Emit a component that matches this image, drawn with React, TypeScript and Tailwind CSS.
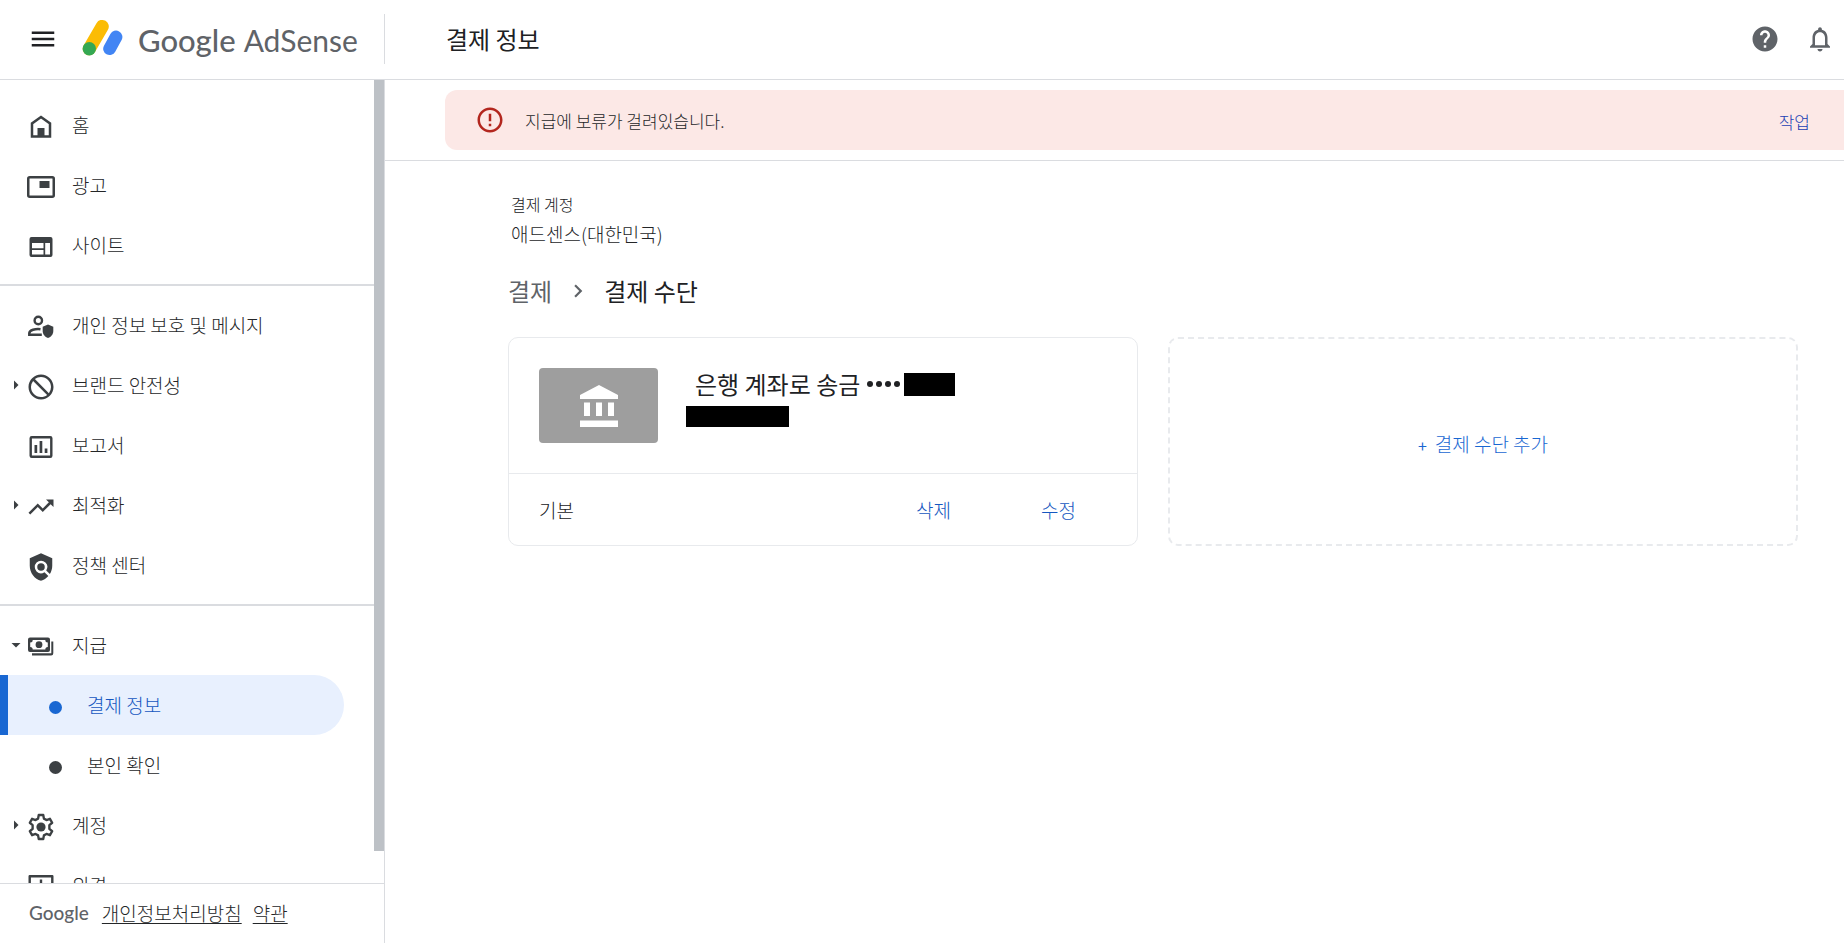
import type { ReactNode } from "react";
import {
  MdBlock,
  MdChevronRight,
  MdErrorOutline,
  MdHelp,
  MdMenu,
  MdNotificationsNone,
  MdPolicy,
  MdTrendingUp,
} from "react-icons/md";

function Glyph({ children }: { children: ReactNode }) {
  return (
    <svg viewBox="0 0 30 30" className="size-[30px]" fill="currentColor" aria-hidden="true">
      {children}
    </svg>
  );
}

const HomeIcon = () => (
  <Glyph>
    <path d="M6 24.5V11.5L15 5l9 6.500V24.500Z" fill="none" stroke="currentColor" strokeWidth="2.500" />
    <path d="M11.500 16h7v9h-7z" />
  </Glyph>
);

const AdsIcon = () => (
  <Glyph>
    <rect x="2.250" y="5.250" width="25.500" height="19.500" rx="1.500" fill="none" stroke="currentColor" strokeWidth="2.500" />
    <path d="M13.500 9h10v7h-10z" />
  </Glyph>
);

const SiteIcon = () => (
  <Glyph>
    <path
      fillRule="evenodd"
      d="M5.500 5h19a2 2 0 0 1 2 2v16a2 2 0 0 1-2 2h-19a2 2 0 0 1-2-2V7a2 2 0 0 1 2-2Zm.5 6v5.200h11.500V11Zm0 7v4.500h11.500V18ZM19.200 11v11.500H24V11Z"
    />
  </Glyph>
);

const PrivacyIcon = () => (
  <Glyph>
    <circle cx="12.300" cy="8.500" r="3.700" fill="none" stroke="currentColor" strokeWidth="2.400" />
    <path d="M14.500 17.200c-5-.7-11.200 1-11.200 4v1.500h12.500" fill="none" stroke="currentColor" strokeWidth="2.500" />
    <path d="M22 12.500l5.300 2.200v4.300c0 3.300-2.200 6-5.300 7-3.100-1-5.300-3.700-5.300-7v-4.300z" />
  </Glyph>
);

const ReportIcon = () => (
  <Glyph>
    <rect x="4.700" y="5.200" width="20.600" height="19.600" rx="1" fill="none" stroke="currentColor" strokeWidth="2.400" />
    <path d="M8.500 13h2.700v8H8.500zM13.600 9h2.700v12h-2.700zM18.700 16.500h2.700V21h-2.700z" />
  </Glyph>
);

const PaymentsIcon = () => (
  <Glyph>
    <path
      fillRule="evenodd"
      d="M4 5.500h18a2 2 0 0 1 2 2V18a2 2 0 0 1-2 2H4a2 2 0 0 1-2-2V7.500a2 2 0 0 1 2-2Zm2.700 2.500a2.500 2.500 0 0 1-2.500 2.500v4.500a2.500 2.500 0 0 1 2.500 2.500h12.600a2.500 2.500 0 0 1 2.500-2.500v-4.500A2.500 2.500 0 0 1 19.300 8Z"
    />
    <circle cx="13" cy="12.700" r="3.400" />
    <path d="M25.300 9.500h2V21.300a2.200 2.200 0 0 1-2.200 2.200H6v-2.200h19.300z" />
  </Glyph>
);

const SettingsIcon = () => (
  <Glyph>
    <path
      d="M12.600 2.200h4.800l.7 3.900 2.700 1.500 3.700-1.300 2.400 4.200-3 2.500v4l3 2.500-2.400 4.200-3.700-1.300-2.700 1.500-.7 3.900h-4.800l-.7-3.900-2.700-1.500-3.700 1.300-2.400-4.200 3-2.500v-4l-3-2.500 2.400-4.200 3.700 1.300 2.700-1.500z"
      transform="translate(.9 .9) scale(.94)"
      fill="none"
      stroke="currentColor"
      strokeWidth="2.500"
      strokeLinejoin="round"
    />
    <circle cx="15" cy="15" r="4.600" />
  </Glyph>
);

const FeedbackIcon = () => (
  <Glyph>
    <path d="M3.700 26V4.200h22.600V22H7.500z" fill="none" stroke="currentColor" strokeWidth="2.400" strokeLinejoin="round" />
    <path d="M13.800 7.500h2.400v7h-2.400zM13.800 16.500h2.400v2.400h-2.400z" />
  </Glyph>
);

const BankIcon = () => (
  <svg viewBox="0 0 38 42" className="h-[42px] w-[38px]" fill="#fff" aria-hidden="true">
    <path d="M19 0l19 10v4H0v-4zM4 17.500h6V31H4zM16 17.500h6V31h-6zM28 17.500h6V31h-6zM0 35.500h38V42H0z" />
  </svg>
);

const AdSenseLogo = () => (
  <svg viewBox="0 0 44 40" className="h-10 w-11" aria-hidden="true">
    <path d="M22.200 9.500L9.300 31.700" stroke="#fbbc04" strokeWidth="13.200" strokeLinecap="round" />
    <path d="M36 20L29.600 31.700" stroke="#4285f4" strokeWidth="12.800" strokeLinecap="round" />
    <circle cx="9.300" cy="31.700" r="6.700" fill="#34a853" />
  </svg>
);

type Item = { label: string; icon: ReactNode; arrow?: "right" | "down" };

function Arrow({ dir }: { dir?: "right" | "down" }) {
  return (
    <span className="flex w-[26px] justify-end pr-[5px]">
      {dir && (
        <svg viewBox="0 0 10 10" className="size-[10px]" fill="currentColor" aria-hidden="true">
          {dir === "right" ? <path d="M3 .5l4.500 4.500L3 9.500z" /> : <path d="M.5 3h9L5 7.500z" />}
        </svg>
      )}
    </span>
  );
}

function NavRow({ label, icon, arrow }: Item) {
  return (
    <a href="#" className="flex h-[60px] shrink-0 items-center text-[19px] leading-6 text-[#3c4043]">
      <Arrow dir={arrow} />
      <span className="pt-1">{icon}</span>
      <span className="ml-4 font-light text-[#242628]">{label}</span>
    </a>
  );
}

function SubRow({ label, active }: { label: string; active?: boolean }) {
  return (
    <a
      href="#"
      className={
        active
          ? "mr-[30px] flex h-[60px] shrink-0 items-center rounded-r-full border-l-8 border-[#1967d2] bg-[#e8f0fe] text-[19px] leading-6 text-[#1967d2]"
          : "mr-[30px] flex h-[60px] shrink-0 items-center border-l-8 border-transparent text-[19px] leading-6 text-[#3c4043]"
      }
    >
      <span className="mt-1 ml-[41px] size-[13px] rounded-full bg-current" />
      <span className={active ? "ml-[25px] font-light text-[#1557c0]" : "ml-[25px] font-light text-[#242628]"}>
        {label}
      </span>
    </a>
  );
}

const Divider = () => <hr className="my-[9px] shrink-0 border-t-2 border-[#dadce0]" />;

const main: Item[] = [
  { label: "홈", icon: <HomeIcon /> },
  { label: "광고", icon: <AdsIcon /> },
  { label: "사이트", icon: <SiteIcon /> },
];

const tools: Item[] = [
  { label: "개인 정보 보호 및 메시지", icon: <PrivacyIcon /> },
  { label: "브랜드 안전성", icon: <MdBlock size={30} className="-scale-x-100" />, arrow: "right" },
  { label: "보고서", icon: <ReportIcon /> },
  { label: "최적화", icon: <MdTrendingUp size={30} />, arrow: "right" },
  { label: "정책 센터", icon: <MdPolicy size={30} /> },
];

function Header() {
  return (
    <header className="flex h-20 shrink-0 items-center border-b border-[#dadce0] pb-[2px]">
      <div className="flex h-[50px] w-[385px] shrink-0 items-center border-r border-[#dadce0] pl-[28px]">
        <button type="button" aria-label="메뉴" className="text-[#202124]">
          <MdMenu size={30} />
        </button>
        <a href="#" className="ml-[22px] flex items-center gap-[14px] whitespace-nowrap text-[#5f6368]">
          <span className="pb-1">
            <AdSenseLogo />
          </span>
          <span className="flex items-baseline gap-2 pt-[2px] font-['Lato','Noto_Sans',sans-serif] leading-10">
            <span className="text-[31px] font-medium">Google</span>
            <span className="text-[30px]">AdSense</span>
          </span>
        </a>
      </div>
      <h1 className="ml-[61px] flex-1 text-2xl text-[#202124]">결제 정보</h1>
      <div className="flex gap-[25px] pr-[9px] text-[#5f6368]">
        <button type="button" aria-label="도움말">
          <MdHelp size={30} />
        </button>
        <button type="button" aria-label="알림">
          <MdNotificationsNone size={30} />
        </button>
      </div>
    </header>
  );
}

function Sidebar() {
  return (
    <aside className="flex w-[385px] shrink-0 flex-col border-r border-[#dadce0]">
      <div className="flex min-h-0 flex-1">
        <nav className="flex min-w-0 flex-1 flex-col overflow-hidden pt-[15px]">
          {main.map((item) => (
            <NavRow key={item.label} {...item} />
          ))}
          <Divider />
          {tools.map((item) => (
            <NavRow key={item.label} {...item} />
          ))}
          <Divider />
          <NavRow label="지급" icon={<PaymentsIcon />} arrow="down" />
          <SubRow label="결제 정보" active />
          <SubRow label="본인 확인" />
          <NavRow label="계정" icon={<SettingsIcon />} arrow="right" />
          <NavRow label="의견" icon={<FeedbackIcon />} />
        </nav>
        <div className="h-[96%] w-[10px] shrink-0 bg-[#bdc1c6]" />
      </div>
      <footer className="flex h-[60px] shrink-0 items-center border-t border-[#dadce0] pl-[29px] text-[19px] font-light text-[#242628]">
        <span className="font-['Lato','Noto_Sans',sans-serif] font-medium text-[#5f6368]">Google</span>
        <a href="#" className="ml-[13px] underline underline-offset-2">
          개인정보처리방침
        </a>
        <a href="#" className="ml-[11px] underline underline-offset-2">
          약관
        </a>
      </footer>
    </aside>
  );
}

function BankCard() {
  return (
    <section className="flex min-h-[209px] flex-col rounded-[10px] border border-[#e8eaed]">
      <div className="flex flex-1 items-start p-[30px]">
        <div className="flex h-[75px] w-[119px] shrink-0 items-center justify-center rounded bg-[#9e9e9e]">
          <BankIcon />
        </div>
        <div className="ml-7">
          <div className="flex h-8 items-center text-2xl leading-8 text-[#202124]">
            <h2 className="ml-[9px]">은행 계좌로 송금</h2>
            <span className="mr-1 ml-[7px] flex gap-[3px]" aria-label="••••">
              <i className="size-[6px] rounded-full bg-[#202124]" />
              <i className="size-[6px] rounded-full bg-[#202124]" />
              <i className="size-[6px] rounded-full bg-[#202124]" />
              <i className="size-[6px] rounded-full bg-[#202124]" />
            </span>
            <span className="h-[23px] w-[51px] bg-black" />
          </div>
          <div className="mt-1.5 h-[21px] w-[103px] bg-black" />
        </div>
      </div>
      <div className="flex h-[72px] items-center border-t border-[#e8eaed] pt-[2px] pr-[61px] pl-[30px] text-[19px]">
        <span className="flex-1 font-light text-[#202124]">기본</span>
        <button type="button" className="font-light text-[#1557c0]">
          삭제
        </button>
        <button type="button" className="ml-[90px] font-light text-[#1557c0]">
          수정
        </button>
      </div>
    </section>
  );
}

export default function App() {
  return (
    <div className="flex h-screen flex-col overflow-hidden bg-white font-['Noto_Sans_CJK_KR',sans-serif]">
      <Header />
      <div className="flex min-h-0 flex-1">
        <Sidebar />
        <main className="min-w-0 flex-1">
          <div className="border-b border-[#dadce0] py-[10px] pl-[60px]">
            <div role="alert" className="flex h-[60px] items-center rounded-l-[12px] bg-[#fce8e6] pr-[34px] pl-[30px]">
              <MdErrorOutline size={30} className="text-[#b3261e]" />
              <p className="ml-5 flex-1 pt-[2px] text-[17px] font-light text-[#242628]">지급에 보류가 걸려있습니다.</p>
              <a href="#" className="pt-1 text-[17px] font-light text-[#1a3fb4]">
                작업
              </a>
            </div>
          </div>
          <div className="pt-[31px] pr-[46px] pl-[123px]">
            <div className="pl-[3px]">
              <p className="text-base leading-6 font-light text-[#202124]">결제 계정</p>
              <p className="mt-1 text-[19px] leading-7 font-light text-[#242628]">애드센스(대한민국)</p>
            </div>
            <nav className="mt-[25px] flex items-center text-2xl leading-9">
              <a href="#" className="text-[#5f6368]">
                결제
              </a>
              <MdChevronRight size={26} className="mx-[13px] text-[#5f6368]" />
              <span className="text-[#202124]">결제 수단</span>
            </nav>
            <div className="mt-7 grid grid-cols-2 gap-[30px]">
              <BankCard />
              <button
                type="button"
                className="flex items-center justify-center gap-2 rounded-[10px] border-2 border-dashed border-[#e8eaed] pt-1.5 text-[19px] font-light text-[#1967d2]"
              >
                <span className="text-base font-normal">+</span>
                <span>결제 수단 추가</span>
              </button>
            </div>
          </div>
        </main>
      </div>
    </div>
  );
}
